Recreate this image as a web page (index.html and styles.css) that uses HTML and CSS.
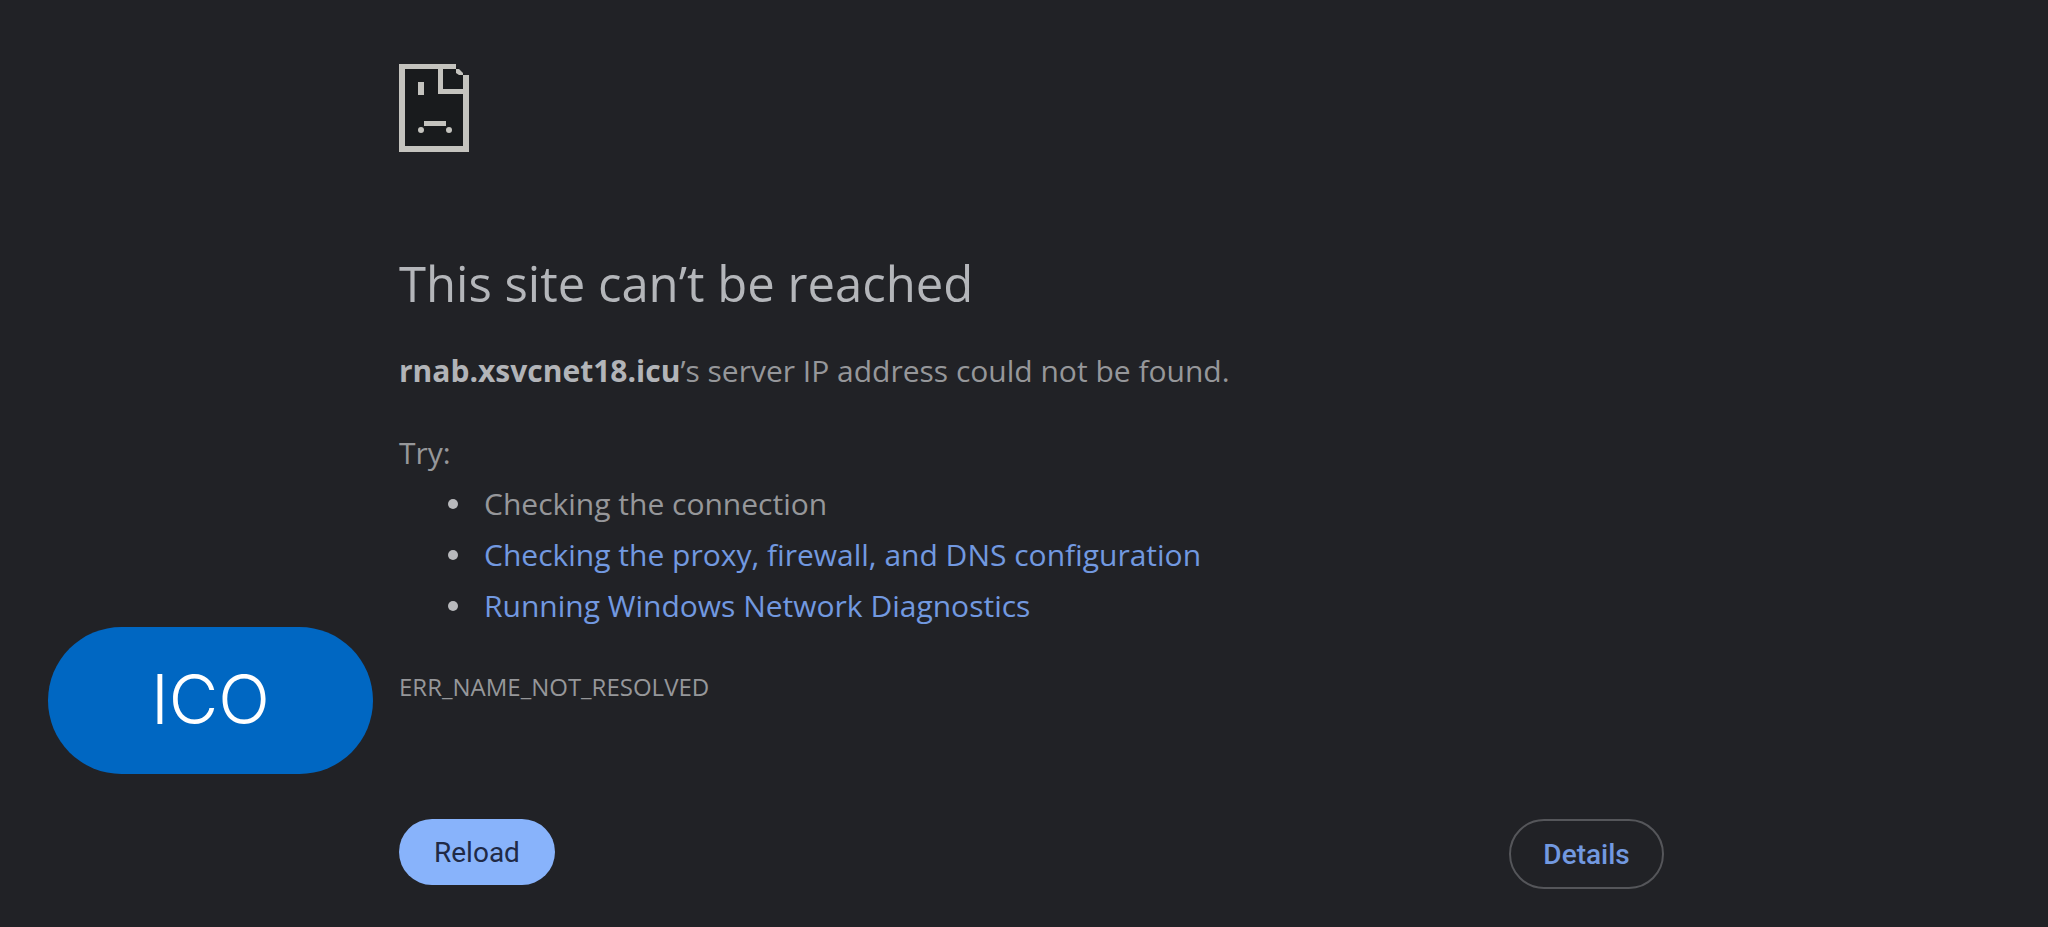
FILE: index.html
```html
<!DOCTYPE html>
<html lang="en">
<head>
<meta charset="utf-8">
<title>This site can’t be reached</title>
<link rel="stylesheet" href="styles.css">
</head>
<body>
<button class="ico-badge" type="button">ICO</button>
<main class="error-page">
  <svg class="error-icon" viewBox="0 0 70 88" aria-hidden="true">
    <path class="icon-paper" d="M3 3H58L67 12V85H3Z"/>
    <path class="icon-line" d="M0 0H57V5H44V25H64V11H70V88H0ZM6 5V82H64V30H39V5Z"/>
    <path class="icon-line" d="M57 5H60L64 9V11H60L57 9ZM19 18H25V31H19ZM25 57H47V62H25Z"/>
    <circle class="icon-line" cx="22" cy="66" r="3"/>
    <circle class="icon-line" cx="50" cy="66" r="3"/>
  </svg>
  <h1 class="title">This site can’t be reached</h1>
  <p class="summary"><strong>rnab.xsvcnet18.icu</strong>’s server IP address could not be found.</p>
  <p class="try">Try:</p>
  <ul class="suggestions">
    <li>Checking the connection</li>
    <li><a href="#proxy">Checking the proxy, firewall, and DNS configuration</a></li>
    <li><a href="#diagnostics">Running Windows Network Diagnostics</a></li>
  </ul>
  <p class="error-code">ERR_NAME_NOT_RESOLVED</p>
  <div class="actions">
    <button class="button reload" type="button">Reload</button>
    <button class="button details" type="button">Details</button>
  </div>
</main>
</body>
</html>
```
FILE: styles.css
```css
* {
  box-sizing: border-box;
}

body {
  margin: 0;
  min-height: 100vh;
  background: #212226;
  color: #96979a;
  font-family: "Open Sans", "Noto Sans", sans-serif;
  font-size: 30px;
  line-height: 51px;
}

.error-page {
  width: 62%;
  min-width: 880px;
  margin-left: 399px;
  padding: 64px 5px 36px 0;
}

.error-icon {
  display: block;
  width: 70px;
  height: 88px;
}

.icon-paper {
  fill: #191b1d;
}

.icon-line {
  fill: #c4c3be;
}

.title {
  margin: 97px 0 0;
  color: #b4b6ba;
  font-size: 49px;
  font-weight: 400;
  line-height: 68px;
}

.summary {
  margin: 28px 0 0;
}

.summary strong {
  color: #b2b4b8;
  font-weight: 700;
}

.try {
  margin: 31px 0 0;
}

.suggestions {
  margin: 0;
  padding: 0 0 0 49px;
  list-style: none;
}

.suggestions li {
  display: flex;
  align-items: center;
  gap: 26px;
}

.suggestions li::before {
  content: "";
  width: 10px;
  height: 10px;
  border-radius: 50%;
  background: #b8b9bc;
}

.suggestions a {
  color: #7299e0;
  text-decoration: none;
}

.error-code {
  margin: 30px 0 0;
  font-size: 24px;
}

.actions {
  display: flex;
  justify-content: space-between;
  align-items: flex-start;
  margin-top: 107px;
}

.button {
  height: 66px;
  padding: 0 35px;
  border: 0;
  border-radius: 35px;
  font-family: Roboto, sans-serif;
  font-size: 28px;
}

.reload {
  background: #88b3fb;
  color: #202a46;
}

.details {
  height: 70px;
  padding: 0 32px;
  border: 2px solid #55565a;
  background: transparent;
  color: #7299e0;
  font-weight: 500;
}

.ico-badge {
  position: absolute;
  top: 627px;
  left: 48px;
  width: 325px;
  height: 147px;
  padding: 0 0 4px;
  border: 0;
  border-radius: 74px;
  background: #0067c2;
  color: #fff;
  font-family: Inter, sans-serif;
  font-size: 68px;
  font-weight: 300;
}
```
